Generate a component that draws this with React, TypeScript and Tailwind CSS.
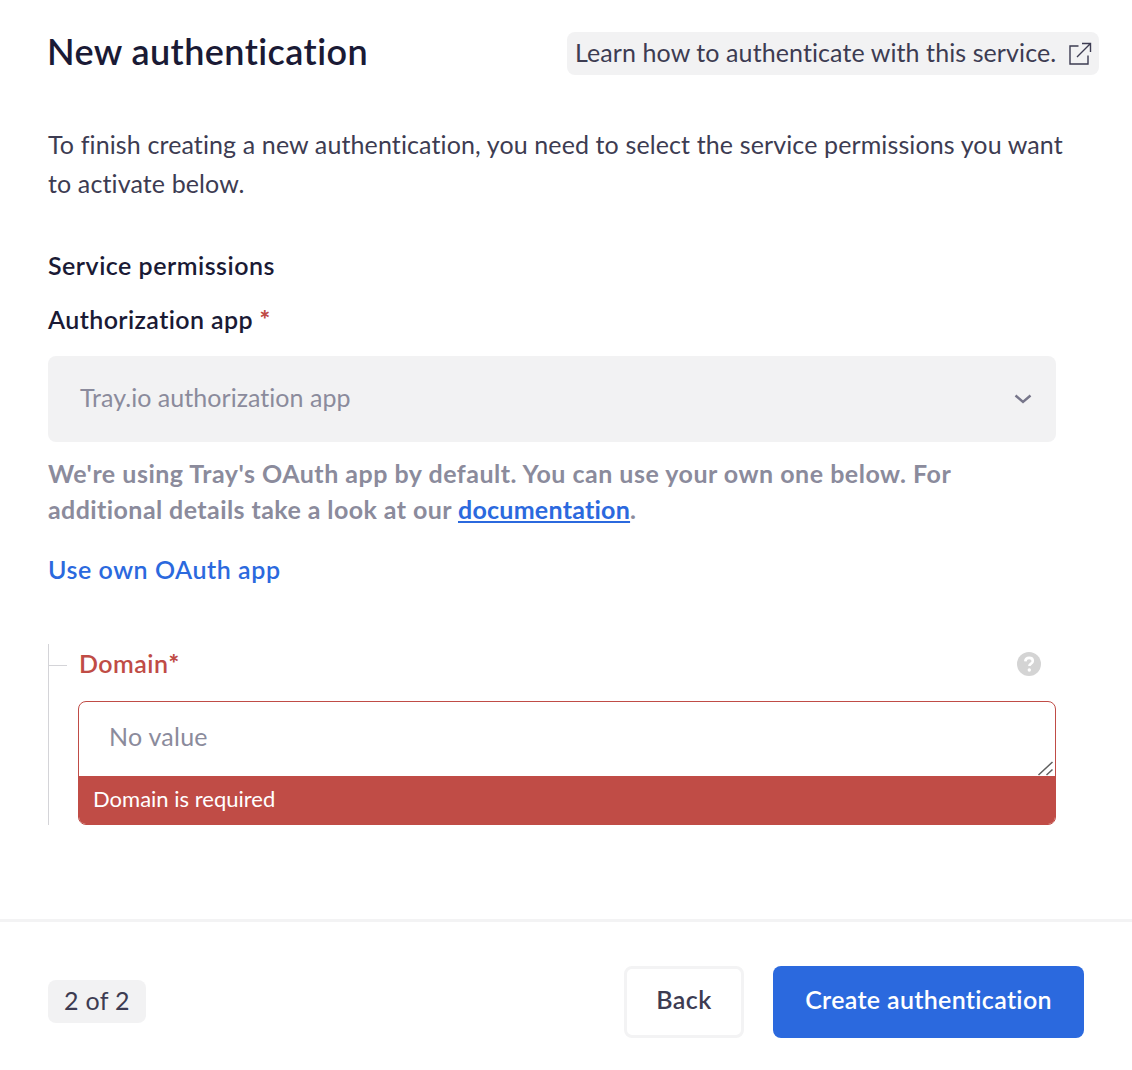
import React from "react";

export default function App() {
  return (
    <div className="flex h-[1070px] w-[1132px] flex-col overflow-hidden bg-white font-['Lato',sans-serif] text-[#3d3c52] [font-variant-ligatures:none]">
      <div className="flex items-start justify-between pl-12 pr-[33px] pt-8">
        <h1 className="-ml-px -mt-px h-10 text-[36px] font-semibold leading-10 tracking-[0.42px] text-[#1a1a35]">New authentication</h1>
        <a className="flex h-[43px] w-[532px] items-center justify-between rounded-lg bg-[#f2f2f3] pb-0.5 pl-2 pr-[7px] text-[25px] tracking-[0.09px]">
          <span>Learn how to authenticate with this service.</span>
          <svg className="mt-0.5" width="24" height="24" viewBox="0 0 24 24" fill="none" stroke="#3d3c52" strokeWidth="1.4">
            <path d="M10.5 4H2v18h18v-8.5" />
            <path d="M9 15 22.5 1.5M14 1.5h8.5V10" />
          </svg>
        </a>
      </div>

      <div className="w-[1056px] pl-12">
        <p className="mt-[50px] w-[1030px] text-[25px] leading-[39px] tracking-[0.12px]">
          To finish creating a new authentication, you need to select the service permissions you want to activate below.
        </p>
        <h2 className="mt-[43px] text-[25px] font-semibold leading-[39px] tracking-[0.5px] text-[#1a1a35]">Service permissions</h2>
        <div className="mt-[15px] text-[25px] font-semibold leading-[39px] tracking-[0.4px] text-[#1a1a35]">
          Authorization app <span className="font-black text-[#c04c46]">*</span>
        </div>
        <div className="mt-[17px] flex h-[86px] items-center justify-between rounded-lg bg-[#f2f2f3] pb-0.5 pl-8 pr-6 text-[25px] tracking-[0.04px] text-[#8b8b9c]">
          <span>Tray.io authorization app</span>
          <svg className="mt-0.5" width="18" height="18" viewBox="0 0 18 18" fill="none" stroke="#77768a" strokeWidth="2.4">
            <path d="M1.500 5.500 9 12l7.500-6.500" />
          </svg>
        </div>
        <p className="mt-[13px] max-w-[960px] text-[25px] font-bold leading-9 tracking-[0.5px] text-[#8b8b9c]">
          We're using Tray's OAuth app by default. You can use your own one below. For{" "}
          <span className="tracking-[0.42px]">additional details take a look at our </span>
          <a className="tracking-[0.25px] text-[#2b69de] underline">documentation</a>.
        </p>
        <a className="mt-[24px] block text-[25px] font-semibold leading-9 tracking-[0.55px] text-[#2b69de]">Use own OAuth app</a>

        <div className="relative mt-[57px] border-l border-[#d4d4d8] pl-[29px]">
          <div className="absolute left-0 top-[21px] h-px w-[18px] bg-[#d4d4d8]" />
          <div className="flex h-[57px] items-start justify-between pr-[15px]">
            <span className="ml-px text-[25px] font-semibold leading-[38px] tracking-[0.45px] text-[#c04c46]">
              Domain<span className="font-black">*</span>
            </span>
            <svg className="mt-2" width="24" height="24" viewBox="0 0 24 24">
              <circle cx="12" cy="12" r="12" fill="#d4d4d4" />
              <path d="M8.300 9.300c.2-2.200 1.800-3.400 3.800-3.400 2.100 0 3.700 1.200 3.700 3 0 1.500-.9 2.200-2 2.900-.9.600-1.400 1-1.400 2.200" fill="none" stroke="#fff" strokeWidth="2.600" />
              <circle cx="12.300" cy="18" r="1.700" fill="#fff" />
            </svg>
          </div>
          <div className="overflow-hidden rounded-lg border border-[#c04c46]">
            <div className="relative flex h-[74px] items-center pb-1 pl-[30px] text-[25px] tracking-[0.25px] text-[#8b8b9c]">
              No value
              <svg className="absolute bottom-0 right-0" width="18" height="16" viewBox="0 0 18 16" fill="none" stroke="#5f5f5f" strokeWidth="1.500">
                <path d="M1.500 15 15.500 2M9.500 15l6-5.500" />
              </svg>
            </div>
            <div className="flex h-[48px] items-center bg-[#c04c46] pb-1 pl-[14px] text-[22px] text-white">Domain is required</div>
          </div>
        </div>
      </div>

      <div className="mt-[94px] flex items-center justify-between border-t-[3px] border-[#f3f3f4] pl-12 pr-12 pt-[44px]">
        <span className="mb-[2px] rounded-lg bg-[#f2f2f3] px-4 pb-[4px] pt-[2px] text-[25px] leading-[37px] tracking-[0.3px]">2 of 2</span>
        <div className="flex gap-[29px]">
          <button className="h-[72px] w-[120px] rounded-lg border-[3px] border-[#f3f3f4] bg-white pb-1 text-[25px] font-semibold tracking-[0.4px]">Back</button>
          <button className="h-[72px] w-[311px] rounded-lg bg-[#2b69de] pb-1 text-[25px] font-semibold tracking-[0.33px] text-white">Create authentication</button>
        </div>
      </div>
    </div>
  );
}
